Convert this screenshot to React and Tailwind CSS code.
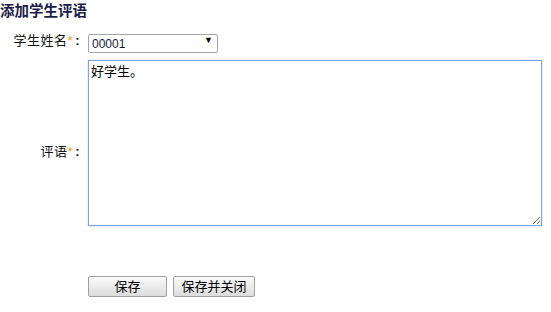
import React, { useState } from 'react';

const font = { fontFamily: '"Liberation Sans", "Noto Sans CJK SC", sans-serif' };

function Label({ children, className = '' }) {
    return (
        <div className={`w-[80px] shrink-0 text-right text-[13px] text-[#111] leading-none tracking-[0.5px] ${className}`}>
            {children}
            <span className="text-[#e0a020]">*</span>
            <span className="ml-[2px] font-bold">:</span>
        </div>
    );
}

export default function App() {
    const [student, setStudent] = useState('00001');
    const [comment, setComment] = useState('好学生。');

    return (
        <div className="w-[551px] h-[312px] bg-white" style={font}>
            <h1 className="pt-[3px] text-[14.5px] font-bold text-[#1c1c48] leading-[16px]">添加学生评语</h1>

            <div className="mt-[12px] flex items-center gap-[8px]">
                <Label>学生姓名</Label>
                <div className="relative w-[130px] h-[19px]">
                    <select
                        value={student}
                        onChange={(e) => setStudent(e.target.value)}
                        className="appearance-none w-full h-full border border-[#a5a5a5] rounded-[2px] bg-white pl-[3px] text-[12px] text-[#1a1a40] outline-none"
                    >
                        <option value="00001">00001</option>
                        <option value="00002">00002</option>
                    </select>
                    <span className="pointer-events-none absolute right-[5px] top-[3px] text-[9px] text-black">▼</span>
                </div>
            </div>

            <div className="mt-[10px] flex items-center gap-[8px]">
                <Label className="pt-[16px]">评语</Label>
                <textarea
                    value={comment}
                    onChange={(e) => setComment(e.target.value)}
                    className="w-[454px] h-[166px] border border-[#7fa3e6] shadow-[0_0_1px_#7fa3e6] px-[2px] py-[3px] text-[13px] text-black leading-[16px] outline-none resize"
                />
            </div>

            <div className="mt-[50px] flex gap-[6px] pl-[88px]">
                <button className="w-[79px] h-[21px] border border-[#a0a0a0] rounded-[2px] bg-gradient-to-b from-[#fbfbfb] to-[#dcdcdc] text-[13px] text-black leading-none">
                    保存
                </button>
                <button className="w-[82px] h-[21px] border border-[#a0a0a0] rounded-[2px] bg-gradient-to-b from-[#fbfbfb] to-[#dcdcdc] text-[13px] text-black leading-none">
                    保存并关闭
                </button>
            </div>
        </div>
    );
}
